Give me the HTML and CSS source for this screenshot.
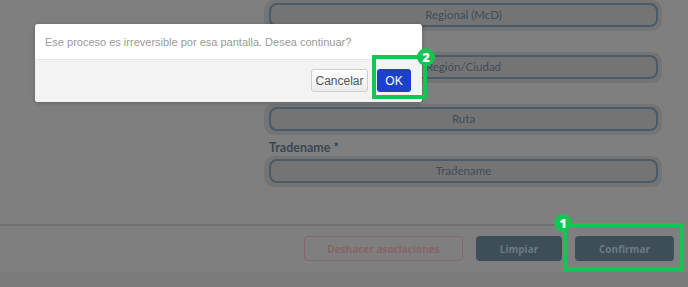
FILE: index.html
```html
<!DOCTYPE html>
<html lang="es">

<head>
    <meta charset="UTF-8">
    <meta name="viewport" content="width=device-width, initial-scale=1.0">
    <title>Asociaciones</title>
    <link rel="stylesheet" href="styles.css">
</head>

<body>
    <div class="page">
        <div class="form">
            <div class="group">
                <span class="label"></span>
                <div class="field"><div class="input">Regional (McD)</div></div>
            </div>
            <div class="group">
                <span class="label"></span>
                <div class="field"><div class="input">Región/Ciudad</div></div>
            </div>
            <div class="group">
                <span class="label"></span>
                <div class="field"><div class="input">Ruta</div></div>
            </div>
            <div class="group">
                <label class="label">Tradename *</label>
                <div class="field"><div class="input">Tradename</div></div>
            </div>
        </div>
        <div class="actions">
            <button class="btn btn-outline">Deshacer asociaciones</button>
            <button class="btn btn-dark">Limpiar</button>
            <button class="btn btn-dark btn-wide">Confirmar</button>
        </div>
        <div class="bottom"></div>
    </div>

    <!-- dialogo -->
    <div class="dialog">
        <div class="dialog-body">Ese proceso es irreversible por esa pantalla. Desea continuar?</div>
        <div class="dialog-footer">
            <button class="dbtn dbtn-cancel">Cancelar</button>
            <button class="dbtn dbtn-ok">OK</button>
        </div>
    </div>

    <!-- marcas -->
    <div class="mark mark-ok"><span class="badge">2</span></div>
    <div class="mark mark-confirm"><span class="badge">1</span></div>
</body>

</html>
```

FILE: styles.css
```css
* {
    box-sizing: border-box;
}

body {
    margin: 0;
    background: #7f7f7f;
    font-family: Lato, "Open Sans", sans-serif;
    overflow: hidden;
}

.page {
    display: flex;
    flex-direction: column;
    height: 287px;
}

.form {
    margin: -21px 0 0 264px;
    width: 398px;
    display: flex;
    flex-direction: column;
}

.label {
    display: block;
    padding-top: 5px;
    height: 21px;
    font-size: 12.5px;
    line-height: 15px;
    font-weight: 700;
    color: #3b4650;
    padding-left: 5px;
}

.field {
    background: #747474;
    border-radius: 10px;
    padding: 3px 4px 4px 5px;
}

.input {
    height: 24px;
    border: 2px solid #4a5b67;
    border-radius: 8px;
    text-align: center;
    font-size: 11.5px;
    line-height: 19px;
    color: #3f4d58;
}

.actions {
    margin-top: 37px;
    border-top: 2px solid #6f6f6f;
    width: 680px;
    display: flex;
    justify-content: flex-end;
    gap: 13px;
    padding: 10px 6px 11px 0;
}

.btn {
    height: 25px;
    border-radius: 4px;
    font-family: "Open Sans", sans-serif;
    font-weight: 700;
    font-size: 10px;
    padding: 0;
}

.btn-outline {
    width: 159px;
    background: transparent;
    border: 1px solid #85686a;
    color: #876466;
}

.btn-dark {
    width: 86px;
    background: #3e4e59;
    border: 0;
    color: #6c7a83;
}

.btn-wide {
    width: 99px;
}

.bottom {
    flex: 1;
    background: #7b7b7b;
}

.dialog {
    position: absolute;
    left: 35px;
    top: 24px;
    width: 387px;
    height: 78px;
    background: #fff;
    border-radius: 3px;
    overflow: hidden;
    box-shadow: 0 1px 4px rgba(0, 0, 0, .25);
    display: flex;
    flex-direction: column;
}

.dialog-body {
    height: 36px;
    padding: 12px 0 0 10px;
    font-family: "Liberation Sans", sans-serif;
    font-size: 11px;
    color: #9a9a9a;
    border-bottom: 1px solid #e6e6e6;
}

.dialog-footer {
    flex: 1;
    background: #f3f3f3;
    display: flex;
    justify-content: flex-end;
    align-items: flex-start;
    gap: 9px;
    padding: 9px 11px 0 0;
}

.dbtn {
    height: 23px;
    border-radius: 3px;
    font-family: "Liberation Sans", sans-serif;
    font-size: 12px;
    padding: 0;
}

.dbtn-cancel {
    width: 57px;
    border: 1px solid #cfcfcf;
    background: linear-gradient(#fff, #ececec);
    color: #555;
}

.dbtn-ok {
    width: 34px;
    border: 0;
    background: #1c41c9;
    color: #fff;
}

.mark {
    position: absolute;
    border: 4px solid #16c454;
}

.mark-ok {
    left: 372px;
    top: 55px;
    width: 55px;
    height: 44px;
}

.mark-confirm {
    left: 563px;
    top: 223px;
    width: 121px;
    height: 48px;
}

.badge {
    position: absolute;
    top: -13px;
    left: -13px;
    width: 18px;
    height: 18px;
    border-radius: 50%;
    background: #16c454;
    color: #fff;
    font-family: "Open Sans", sans-serif;
    font-weight: 800;
    font-size: 13px;
    line-height: 18px;
    text-align: center;
}

.mark-ok .badge {
    left: auto;
    right: -12px;
    top: -11px;
}
```
